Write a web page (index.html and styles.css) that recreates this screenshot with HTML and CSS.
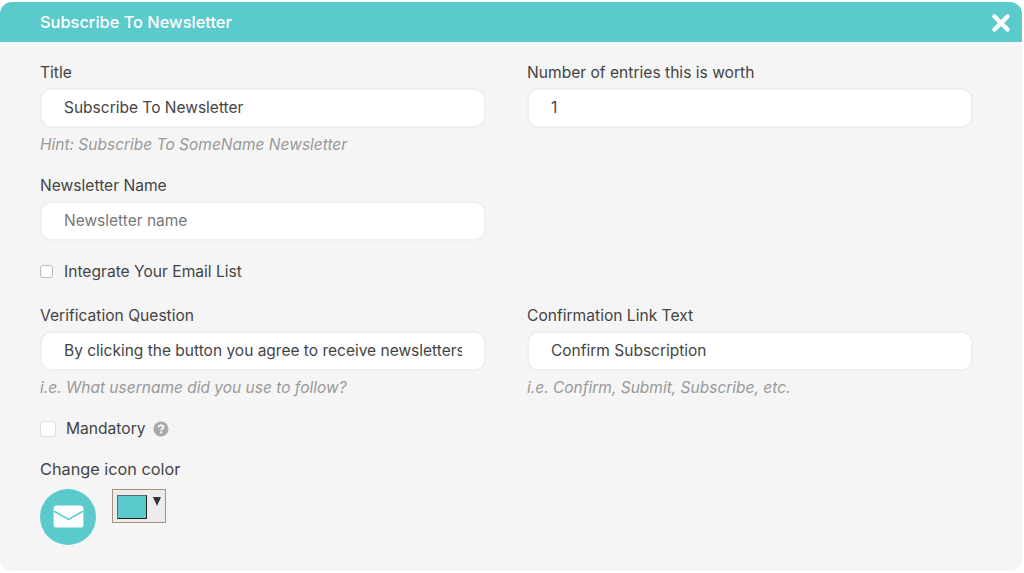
FILE: index.html
```html
<!DOCTYPE html>
<html lang="en">
<head>
  <meta charset="UTF-8" />
  <title>Subscribe To Newsletter</title>
  <link rel="stylesheet" href="styles.css">
</head>
<body>
  <div class="modal">
    <div class="modal-header">
      <h1>Subscribe To Newsletter</h1>
      <svg class="close" viewBox="0 0 20 20" aria-label="Close">
        <path d="M3.5 3.5L16.500 16.500M16.500 3.500L3.500 16.500" />
      </svg>
    </div>
    <form class="modal-body">
      <div class="row">
        <div class="field">
          <label for="title">Title</label>
          <input type="text" id="title" value="Subscribe To Newsletter">
          <p class="hint">Hint: Subscribe To SomeName Newsletter</p>
        </div>
        <div class="field">
          <label for="entries">Number of entries this is worth</label>
          <input type="text" id="entries" value="1">
        </div>
      </div>
      <div class="row row-name">
        <div class="field">
          <label for="newsletter">Newsletter Name</label>
          <input type="text" id="newsletter" placeholder="Newsletter name">
        </div>
      </div>
      <label class="check check-integrate">
        <input type="checkbox">
        <span>Integrate Your Email List</span>
      </label>
      <div class="row row-verify">
        <div class="field">
          <label for="question">Verification Question</label>
          <input type="text" id="question" value="By clicking the button you agree to receive newsletters">
          <p class="hint">i.e. What username did you use to follow?</p>
        </div>
        <div class="field">
          <label for="confirm">Confirmation Link Text</label>
          <input type="text" id="confirm" value="Confirm Subscription">
          <p class="hint">i.e. Confirm, Submit, Subscribe, etc.</p>
        </div>
      </div>
      <div class="check check-mandatory">
        <input type="checkbox" id="mandatory">
        <label for="mandatory">Mandatory</label>
        <svg class="help" viewBox="0 0 16 16">
          <circle cx="8" cy="8" r="7.500" fill="#a9a9a9" />
          <path d="M5.700 6.200C5.800 4.900 6.800 4.200 8.100 4.200C9.400 4.200 10.400 5 10.400 6.100C10.400 7.600 8.100 7.700 8.100 9.300" fill="none" stroke="#f5f5f5" stroke-width="1.900" />
          <rect x="7.100" y="10.400" width="2" height="2" fill="#f5f5f5" />
        </svg>
      </div>
      <p class="color-title">Change icon color</p>
      <div class="color-row">
        <div class="icon-circle">
          <svg viewBox="0 0 32 24" class="envelope">
            <rect width="31" height="23" x="0.500" y="0.500" rx="3" fill="#fff" />
            <path d="M1 6.500L16 15L31 6.500" fill="none" stroke="#5bcacc" stroke-width="1.600" />
          </svg>
        </div>
        <div class="color-picker">
          <span class="swatch"></span>
          <span class="arrow"></span>
        </div>
      </div>
    </form>
  </div>
</body>
</html>
```
FILE: styles.css
```css
* {
  box-sizing: border-box;
}

body {
  margin: 0;
  background: #fff;
  font-family: Inter, "Noto Sans", sans-serif;
  color: #444;
  padding: 2px 2px 2px 0;
}

.modal {
  height: 569px;
  background: #f5f5f5;
  border-radius: 12px;
  overflow: hidden;
}

.modal-header {
  height: 40px;
  background: #5bcacc;
  display: flex;
  align-items: center;
  justify-content: space-between;
  padding: 0 11px 0 40px;
}

.modal-header h1 {
  margin: 0 0 1px;
  font-size: 16.400px;
  font-weight: 500;
  color: #fff;
}

.close {
  width: 20px;
  height: 20px;
  margin-top: 2px;
}

.close path {
  fill: none;
  stroke: #fff;
  stroke-width: 4.500;
  stroke-linecap: round;
}

.modal-body {
  padding: 22px 49px 0 40px;
}

.row {
  display: grid;
  grid-template-columns: 446px 446px;
  column-gap: 41px;
}

.row-name {
  margin-top: 23px;
}

.row-verify {
  margin-top: 26px;
}

.field label {
  display: block;
  font-size: 15.600px;
  line-height: 18px;
  margin-bottom: 6px;
}

.field input {
  display: block;
  width: 100%;
  height: 40px;
  padding: 0 22px 2px;
  border: 2px solid #efefef;
  border-radius: 11px;
  background: #fff;
  font-family: inherit;
  font-size: 15.500px;
  color: #444;
  outline: none;
}

.field input::placeholder {
  color: #777;
}

.hint {
  margin: 8px 0 0;
  font-size: 15.500px;
  line-height: 18px;
  font-style: italic;
  color: #999;
}

.check {
  display: flex;
  align-items: center;
  font-size: 15.600px;
  line-height: 18px;
}

.check input {
  appearance: none;
  margin: 0;
  background: #fff;
  border: 1px solid #ddd;
  border-radius: 3px;
}

.check-integrate {
  margin-top: 22px;
}

.check-integrate input {
  width: 13px;
  height: 13px;
  margin: 0 11px 2px 0;
  border-color: #bbb;
}

.check-mandatory {
  margin-top: 23px;
}

.check-mandatory input {
  width: 16px;
  height: 16px;
  margin-right: 10px;
}

.help {
  width: 16px;
  height: 16px;
  margin-left: 7px;
}

.color-title {
  margin: 22px 0 0;
  font-size: 16.300px;
  line-height: 18px;
}

.color-row {
  display: flex;
  align-items: flex-start;
  gap: 16px;
  margin-top: 11px;
}

.icon-circle {
  width: 56px;
  height: 56px;
  border-radius: 50%;
  background: #5bcacc;
  display: flex;
  align-items: center;
  justify-content: center;
}

.envelope {
  width: 31px;
  height: 23px;
  margin-bottom: 2px;
}

.color-picker {
  width: 54px;
  height: 34px;
  background: #ececec;
  border: 1px solid #a89080;
  display: flex;
  align-items: flex-start;
  padding: 5px 0 0 4px;
}

.swatch {
  width: 30px;
  height: 24px;
  background: #5bcacc;
  border: 1px solid #222;
  border-top-color: #666;
  border-left-color: #666;
}

.arrow {
  margin: 2px 0 0 6px;
  border-left: 4.500px solid transparent;
  border-right: 4.500px solid transparent;
  border-top: 9px solid #333;
}
```
